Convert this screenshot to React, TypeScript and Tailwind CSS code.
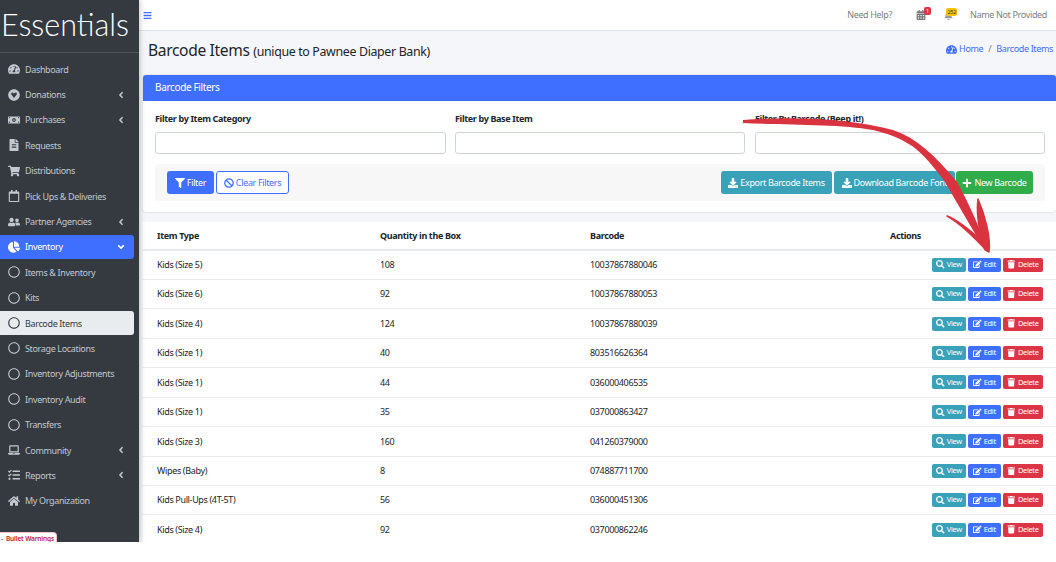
import React from "react";
import {
  FaTachometerAlt, FaGratipay, FaMoneyBillAlt, FaFileAlt, FaShoppingCart, FaRegCalendar, FaUserFriends, FaChartPie,
  FaRegCircle, FaLaptop, FaHome, FaAngleLeft, FaAngleDown, FaBars, FaCalendarAlt, FaBell, FaFilter, FaBan, FaDownload,
  FaPlus, FaSearch, FaEdit, FaTrash, FaTasks,
} from "react-icons/fa";

type NavItem = { label: string; icon: React.ElementType; arrow?: boolean; state?: "primary" | "current"; down?: boolean };

const nav: NavItem[] = [
  { label: "Dashboard", icon: FaTachometerAlt },
  { label: "Donations", icon: FaGratipay, arrow: true },
  { label: "Purchases", icon: FaMoneyBillAlt, arrow: true },
  { label: "Requests", icon: FaFileAlt },
  { label: "Distributions", icon: FaShoppingCart },
  { label: "Pick Ups & Deliveries", icon: FaRegCalendar },
  { label: "Partner Agencies", icon: FaUserFriends, arrow: true },
  { label: "Inventory", icon: FaChartPie, arrow: true, state: "primary", down: true },
  { label: "Items & Inventory", icon: FaRegCircle },
  { label: "Kits", icon: FaRegCircle },
  { label: "Barcode Items", icon: FaRegCircle, state: "current" },
  { label: "Storage Locations", icon: FaRegCircle },
  { label: "Inventory Adjustments", icon: FaRegCircle },
  { label: "Inventory Audit", icon: FaRegCircle },
  { label: "Transfers", icon: FaRegCircle },
  { label: "Community", icon: FaLaptop, arrow: true },
  { label: "Reports", icon: FaTasks, arrow: true },
  { label: "My Organization", icon: FaHome },
];

const rows = [
  ["Kids (Size 5)", "108", "10037867880046"],
  ["Kids (Size 6)", "92", "10037867880053"],
  ["Kids (Size 4)", "124", "10037867880039"],
  ["Kids (Size 1)", "40", "803516626364"],
  ["Kids (Size 1)", "44", "036000406535"],
  ["Kids (Size 1)", "35", "037000863427"],
  ["Kids (Size 3)", "160", "041260379000"],
  ["Wipes (Baby)", "8", "074887711700"],
  ["Kids Pull-Ups (4T-5T)", "56", "036000451306"],
  ["Kids (Size 4)", "92", "037000862246"],
];

function NavRow({ item }: { item: NavItem }) {
  const Icon = item.icon;
  const tone =
    item.state === "primary"
      ? "bg-[#3f6fff] text-white"
      : item.state === "current"
        ? "bg-[#e9ecef] text-[#343a40]"
        : "text-[#c2c7d0]";
  return (
    <div className={`flex h-[23.4px] w-[134px] shrink-0 items-center rounded-r-[3px] pl-[7px] pr-[8px] ${tone}`}>
      <span className="flex w-[14px] justify-center">
        <Icon className="text-[12px]" />
      </span>
      <span className="ml-[4px] flex-1 whitespace-nowrap text-[9px] leading-none">{item.label}</span>
      {item.arrow && (item.down ? <FaAngleDown className="text-[10px]" /> : <FaAngleLeft className="text-[10px]" />)}
    </div>
  );
}

function Btn({ icon: Icon, label, cls }: { icon: React.ElementType; label: string; cls: string }) {
  return (
    <div className={`flex h-[23px] items-center justify-center gap-[2px] whitespace-nowrap rounded-[3px] text-[9px] leading-none ${cls}`}>
      <Icon className="text-[10px]" />
      {label}
    </div>
  );
}

function Small({ icon: Icon, label, cls }: { icon: React.ElementType; label: string; cls: string }) {
  return (
    <div className={`flex h-[14px] items-center justify-center gap-[2px] rounded-[2px] text-[7.5px] leading-none text-white ${cls}`}>
      <Icon className="text-[8.5px]" />
      {label}
    </div>
  );
}

function Field({ label, cls }: { label: string; cls: string }) {
  return (
    <div className={cls}>
      <div className="h-[20px] pt-[1px] text-[9px] font-bold leading-[12px] text-[#212529]">{label}</div>
      <div className="h-[22px] rounded-[3px] border border-[#ced4da] bg-white" />
    </div>
  );
}

export default function App() {
  return (
    <div
      className="relative w-[1056px] bg-white tracking-[-0.35px]"
      style={{ height: 562, fontFamily: '"Noto Sans", sans-serif' }}
    >
      <div className="relative flex h-[542px] overflow-hidden bg-[#f4f6f9]">
        {/* Sidebar */}
        <aside className="relative z-10 flex w-[139px] shrink-0 flex-col bg-[#343a40] shadow-[0_0_6px_rgba(0,0,0,0.3)]">
          <div className="flex h-[53px] shrink-0 items-center border-b border-[#4b545c] pb-[4px] pl-[1px]">
            <span className="text-[30.5px] leading-none tracking-normal text-white" style={{ fontFamily: '"Lato", sans-serif', fontWeight: 300 }}>
              Essentials
            </span>
          </div>
          <nav className="mt-[4.5px] flex flex-col gap-[2px]">
            {nav.map((n) => (
              <NavRow key={n.label} item={n} />
            ))}
          </nav>
        </aside>

        {/* Main */}
        <main className="flex min-w-0 flex-1 flex-col">
          <header className="flex h-[31px] shrink-0 items-center border-b border-[#dee2e6] bg-white pl-[4px] pr-[9px] text-[9px] text-[#7b8084]">
            <FaBars className="text-[9px] text-[#3f6fff]" />
            <span className="ml-auto">Need Help?</span>
            <span className="relative ml-[24px] mr-[14px] flex">
              <FaCalendarAlt className="text-[10px] text-[#777]" />
              <span className="absolute left-[8px] top-[-3px] h-[8px] rounded-[2px] bg-[#dc3545] px-[2px] text-[5.5px] leading-[8px] text-white">1</span>
            </span>
            <span className="relative ml-[4px] mr-[17px] flex">
              <FaBell className="text-[9px] text-[#999]" />
              <span className="absolute left-[2px] top-[-3px] h-[8px] rounded-[2px] bg-[#ffc107] px-[1.5px] text-[5.5px] leading-[8px] text-[#343a40]">252</span>
            </span>
            <span>Name Not Provided</span>
          </header>

          <div className="flex h-[44px] shrink-0 items-center pl-[9px] pr-[3px]">
            <span className="pb-[4px] text-[15.6px] leading-none text-[#212529]">
              Barcode Items <span className="text-[12.4px]">(unique to Pawnee Diaper Bank)</span>
            </span>
            <span className="ml-auto flex items-center whitespace-nowrap pb-[8px] text-[9px] text-[#3f6fff]">
              <FaTachometerAlt className="mr-[2px] text-[11px]" />
              Home <span className="mx-[5px] text-[#6c757d]">/</span> Barcode Items
            </span>
          </div>

          <section className="ml-[4px] h-[137px] shrink-0 rounded-[3px] bg-white shadow-[0_0_2px_rgba(0,0,0,0.2)]">
            <div className="flex h-[26px] items-center rounded-t-[3px] bg-[#3f6fff] pb-[1px] pl-[12px] text-[10px] text-white">Barcode Filters</div>
            <div className="flex pl-[12px] pt-[11px]">
              <Field label="Filter by Item Category" cls="w-[291px]" />
              <Field label="Filter by Base Item" cls="ml-[9px] w-[290px]" />
              <Field label="Filter By Barcode (Beep it!)" cls="ml-[10px] w-[290px]" />
            </div>
            <div className="ml-[12px] mt-[10px] flex h-[37px] w-[890px] items-center rounded-[3px] bg-[#f7f7f7] px-[12px]">
              <Btn icon={FaFilter} label="Filter" cls="w-[47px] bg-[#3f6fff] text-white" />
              <Btn icon={FaBan} label="Clear Filters" cls="ml-[2px] w-[73px] border border-[#3f6fff] bg-white text-[#3f6fff]" />
              <Btn icon={FaDownload} label="Export Barcode Items" cls="ml-auto w-[111px] bg-[#3aa2b8] text-white" />
              <Btn icon={FaDownload} label="Download Barcode Font" cls="ml-[2px] w-[121px] bg-[#3aa2b8] text-white" />
              <Btn icon={FaPlus} label="New Barcode" cls="ml-[1px] w-[77px] bg-[#31ac4b] text-white" />
            </div>
          </section>

          <section className="ml-[4px] mt-[10px] flex-1 bg-white">
            <div className="grid h-[28.5px] grid-cols-[223px_210px_300px_1fr] items-center border-b-2 border-[#e9ecef] pl-[14px] text-[9px] font-bold text-[#212529]">
              <span>Item Type</span>
              <span>Quantity in the Box</span>
              <span>Barcode</span>
              <span>Actions</span>
            </div>
            {rows.map((r, i) => (
              <div key={i} className="grid h-[29.45px] grid-cols-[223px_210px_300px_1fr] items-center border-b border-[#e9ecef] pl-[14px] text-[9px] text-[#212529]">
                <span>{r[0]}</span>
                <span>{r[1]}</span>
                <span>{r[2]}</span>
                <span className="flex gap-[2px] pl-[42px]">
                  <Small icon={FaSearch} label="View" cls="w-[34px] bg-[#3aa2b8]" />
                  <Small icon={FaEdit} label="Edit" cls="w-[33px] bg-[#3f6fff]" />
                  <Small icon={FaTrash} label="Delete" cls="w-[40px] bg-[#dc3545]" />
                </span>
              </div>
            ))}
          </section>
        </main>

        {/* Hand-drawn arrow annotation */}
        <svg className="absolute left-0 top-0 z-20" width="1056" height="542" viewBox="0 0 1056 542" fill="none">
          <path
            d="M743 120 C 790 116 850 118 893 130 C 915 137 935 155 957 182 C 970 205 980 230 989 251 L 985 251 C 972 228 958 205 945 182 C 930 162 920 150 907 143 C 895 135 880 132 873 130 C 840 124 790 125 743 123 Z"
            fill="#d9333f"
          />
          <path
            d="M947 216 C 958 222 975 238 987 251 L 989 252 C 991 238 985 215 978 199 C 976 212 979 228 982 241 C 972 232 958 220 947 216 Z"
            fill="#d9333f"
            stroke="#d9333f"
            strokeWidth="1.5"
            strokeLinejoin="round"
          />
        </svg>

        <div className="absolute bottom-0 left-[-3px] z-20 flex h-[10px] w-[60px] items-start whitespace-nowrap rounded-t-[4px] border border-b-0 border-[#f2c2c6] bg-white pl-[3px] text-[6.5px] font-semibold leading-[12px] tracking-[-0.15px] text-[#c0202e]">
          <span className="mr-[3px]">-</span>
          Bullet Warnings
        </div>
      </div>
    </div>
  );
}
